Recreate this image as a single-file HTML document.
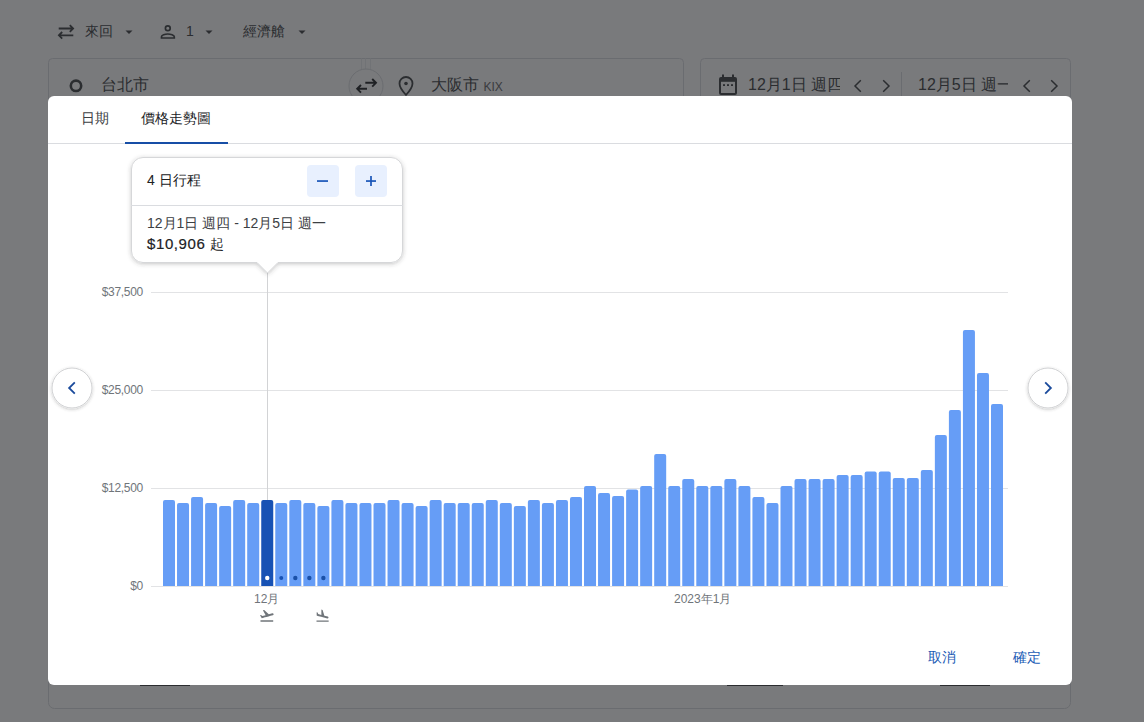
<!DOCTYPE html>
<html><head><meta charset="utf-8">
<style>
*{margin:0;padding:0;box-sizing:border-box}
html,body{width:1144px;height:722px;overflow:hidden;background:#fff;font-family:"Liberation Sans",sans-serif;}
.abs{position:absolute}
.t{position:absolute;white-space:nowrap;line-height:1}
#overlay{position:absolute;left:0;top:0;width:1144px;height:722px;background:rgba(32,33,36,0.6)}
#dlg{position:absolute;left:48px;top:96px;width:1024px;height:589px;background:#fff;border-radius:6px;overflow:hidden}
</style></head><body>
<!-- background page -->
<div id="page" class="abs" style="left:0;top:0;width:1144px;height:722px">
  <svg class="abs" style="left:0;top:0" width="1144" height="722" viewBox="0 0 1144 722">
    <!-- swap icon -->
    <g fill="none" stroke="#3c4043" stroke-width="1.8">
      <path d="M58.7 28.5H72.5M69.8 25.2l3.3 3.3-3.3 3.3"/>
      <path d="M73.3 35.3H59.5M62.2 32l-3.3 3.3 3.3 3.3"/>
    </g>
    <path d="M125.5 30.5h7l-3.5 3.5z" fill="#3c4043"/>
    <path d="M205.5 30.5h7l-3.5 3.5z" fill="#3c4043"/>
    <path d="M298.5 30.5h7l-3.5 3.5z" fill="#3c4043"/>
    <!-- person -->
    <g fill="none" stroke="#3c4043" stroke-width="1.7">
      <circle cx="167.8" cy="28.3" r="2.4"/>
      <path d="M161.5 38v-1.2c0-1.6 3.5-2.8 6.3-2.8s6.5 1.2 6.5 2.8V38z"/>
    </g>
    <!-- boxes -->
    <g fill="none" stroke="#dadce0" stroke-width="1">
      <path d="M48.5 120V62.5a4 4 0 0 1 4-4H679.5a4 4 0 0 1 4 4V120"/>
      <path d="M361.5 58.5V72M365.5 58.5V70M370.5 58.5V72" stroke="#eceef0"/>
      <rect x="700.5" y="58.5" width="370" height="60" rx="4"/>
      <rect x="48.5" y="560.5" width="1022" height="148" rx="6"/>
      <path d="M901.5 72v40"/>
    </g>
    <circle cx="366" cy="86" r="17" fill="#fff" stroke="#dadce0"/>
    <!-- origin circle icon -->
    <circle cx="76" cy="85.8" r="5.2" fill="none" stroke="#3c4043" stroke-width="2.6"/>
    <!-- swap arrows small -->
    <g fill="none" stroke="#202124" stroke-width="1.9">
      <path d="M365.3 82.8H375M372.2 79l3.8 3.8-3.8 3.8"/>
      <path d="M367 88.8H358M361 85l-3.8 3.8 3.8 3.8"/>
    </g>
    <!-- pin -->
    <path d="M406 77a6.5 6.5 0 0 0-6.5 6.5c0 4.5 6.5 11.5 6.5 11.5s6.5-7 6.5-11.5A6.5 6.5 0 0 0 406 77z" fill="none" stroke="#3c4043" stroke-width="1.8"/>
    <circle cx="406" cy="83.5" r="1.8" fill="#3c4043"/>
    <!-- calendar -->
    <g fill="#3c4043">
      <rect x="719" y="77" width="18" height="18" rx="2"/>
      <rect x="722" y="74.5" width="2" height="4"/><rect x="732" y="74.5" width="2" height="4"/>
    </g>
    <rect x="721" y="81.8" width="14" height="11.2" fill="#fff"/>
    <g fill="#3c4043"><rect x="723" y="84.2" width="2" height="1.8"/><rect x="727" y="84.2" width="2" height="1.8"/><rect x="731" y="84.2" width="2" height="1.8"/></g>
    <g fill="none" stroke="#3c4043" stroke-width="1.5">
      <path d="M860.8 80.2l-5.8 5.8 5.8 5.8"/><path d="M883.2 80.2l5.8 5.8-5.8 5.8"/>
      <path d="M1029.8 80.2l-5.8 5.8 5.8 5.8"/><path d="M1051.2 80.2l5.8 5.8-5.8 5.8"/>
    </g>
  </svg>
  <div class="t" style="left:85px;top:24px;font-size:14px;color:#3c4043">來回</div>
  <div class="t" style="left:186px;top:24px;font-size:14px;color:#3c4043">1</div>
  <div class="t" style="left:243px;top:24px;font-size:14px;color:#3c4043">經濟艙</div>
  <div class="t" style="left:101px;top:77px;font-size:16px;color:#3c4043">台北市</div>
  <div class="t" style="left:431px;top:77px;font-size:16px;color:#3c4043">大阪市 <span style="font-size:12px;color:#5f6368;position:relative;top:1px">KIX</span></div>
  <div class="t" style="left:748px;top:77px;width:92px;overflow:hidden;font-size:16px;color:#3c4043">12月1日 週四</div>
  <div class="t" style="left:918px;top:77px;width:90px;overflow:hidden;font-size:16px;color:#3c4043">12月5日 週一</div>
  <div class="abs" style="left:140px;top:685px;width:50px;height:1px;background:#3c4043"></div>
  <div class="abs" style="left:727px;top:685px;width:56px;height:1px;background:#3c4043"></div>
  <div class="abs" style="left:940px;top:685px;width:50px;height:1px;background:#3c4043"></div>
</div>
<div id="overlay"></div>
<div id="dlg">
  <div class="t" style="left:33px;top:15px;font-size:14px;color:#3c4043">日期</div>
  <div class="t" style="left:93px;top:15px;font-size:14px;color:#202124">價格走勢圖</div>
  <div class="abs" style="left:0;top:47px;width:1024px;height:1px;background:#dadce0"></div>
  <div class="abs" style="left:77px;top:46px;width:103px;height:2px;background:#174ea6"></div>
</div>
<svg class="abs" style="left:0;top:0" width="1144" height="722" viewBox="0 0 1144 722">
  <g fill="#e2e3e5">
    <rect x="151" y="292" width="857" height="1"/>
    <rect x="151" y="390" width="857" height="1"/>
    <rect x="151" y="488" width="857" height="1"/>
    <rect x="151" y="586" width="857" height="1"/>
  </g>
  <rect x="267" y="273" width="1" height="313" fill="#d2d3d5"/>
  <path d="M163.00 586V502.00a2 2 0 0 1 2-2h8a2 2 0 0 1 2 2V586z" fill="#669df6"/>
<path d="M177.03 586V505.00a2 2 0 0 1 2-2h8a2 2 0 0 1 2 2V586z" fill="#669df6"/>
<path d="M191.07 586V499.00a2 2 0 0 1 2-2h8a2 2 0 0 1 2 2V586z" fill="#669df6"/>
<path d="M205.10 586V505.00a2 2 0 0 1 2-2h8a2 2 0 0 1 2 2V586z" fill="#669df6"/>
<path d="M219.14 586V508.00a2 2 0 0 1 2-2h8a2 2 0 0 1 2 2V586z" fill="#669df6"/>
<path d="M233.17 586V502.00a2 2 0 0 1 2-2h8a2 2 0 0 1 2 2V586z" fill="#669df6"/>
<path d="M247.20 586V505.00a2 2 0 0 1 2-2h8a2 2 0 0 1 2 2V586z" fill="#669df6"/>
<path d="M261.24 586V502.00a2 2 0 0 1 2-2h8a2 2 0 0 1 2 2V586z" fill="#1852b4"/>
<path d="M275.27 586V505.00a2 2 0 0 1 2-2h8a2 2 0 0 1 2 2V586z" fill="#669df6"/>
<path d="M289.31 586V502.00a2 2 0 0 1 2-2h8a2 2 0 0 1 2 2V586z" fill="#669df6"/>
<path d="M303.34 586V505.00a2 2 0 0 1 2-2h8a2 2 0 0 1 2 2V586z" fill="#669df6"/>
<path d="M317.37 586V508.00a2 2 0 0 1 2-2h8a2 2 0 0 1 2 2V586z" fill="#669df6"/>
<path d="M331.41 586V502.00a2 2 0 0 1 2-2h8a2 2 0 0 1 2 2V586z" fill="#669df6"/>
<path d="M345.44 586V505.00a2 2 0 0 1 2-2h8a2 2 0 0 1 2 2V586z" fill="#669df6"/>
<path d="M359.47 586V505.00a2 2 0 0 1 2-2h8a2 2 0 0 1 2 2V586z" fill="#669df6"/>
<path d="M373.51 586V505.00a2 2 0 0 1 2-2h8a2 2 0 0 1 2 2V586z" fill="#669df6"/>
<path d="M387.54 586V502.00a2 2 0 0 1 2-2h8a2 2 0 0 1 2 2V586z" fill="#669df6"/>
<path d="M401.58 586V505.00a2 2 0 0 1 2-2h8a2 2 0 0 1 2 2V586z" fill="#669df6"/>
<path d="M415.61 586V508.00a2 2 0 0 1 2-2h8a2 2 0 0 1 2 2V586z" fill="#669df6"/>
<path d="M429.64 586V502.00a2 2 0 0 1 2-2h8a2 2 0 0 1 2 2V586z" fill="#669df6"/>
<path d="M443.68 586V505.00a2 2 0 0 1 2-2h8a2 2 0 0 1 2 2V586z" fill="#669df6"/>
<path d="M457.71 586V505.00a2 2 0 0 1 2-2h8a2 2 0 0 1 2 2V586z" fill="#669df6"/>
<path d="M471.75 586V505.00a2 2 0 0 1 2-2h8a2 2 0 0 1 2 2V586z" fill="#669df6"/>
<path d="M485.78 586V502.00a2 2 0 0 1 2-2h8a2 2 0 0 1 2 2V586z" fill="#669df6"/>
<path d="M499.81 586V505.00a2 2 0 0 1 2-2h8a2 2 0 0 1 2 2V586z" fill="#669df6"/>
<path d="M513.85 586V508.00a2 2 0 0 1 2-2h8a2 2 0 0 1 2 2V586z" fill="#669df6"/>
<path d="M527.88 586V502.00a2 2 0 0 1 2-2h8a2 2 0 0 1 2 2V586z" fill="#669df6"/>
<path d="M541.92 586V505.00a2 2 0 0 1 2-2h8a2 2 0 0 1 2 2V586z" fill="#669df6"/>
<path d="M555.95 586V502.00a2 2 0 0 1 2-2h8a2 2 0 0 1 2 2V586z" fill="#669df6"/>
<path d="M569.98 586V499.00a2 2 0 0 1 2-2h8a2 2 0 0 1 2 2V586z" fill="#669df6"/>
<path d="M584.02 586V488.00a2 2 0 0 1 2-2h8a2 2 0 0 1 2 2V586z" fill="#669df6"/>
<path d="M598.05 586V495.00a2 2 0 0 1 2-2h8a2 2 0 0 1 2 2V586z" fill="#669df6"/>
<path d="M612.08 586V498.00a2 2 0 0 1 2-2h8a2 2 0 0 1 2 2V586z" fill="#669df6"/>
<path d="M626.12 586V491.50a2 2 0 0 1 2-2h8a2 2 0 0 1 2 2V586z" fill="#669df6"/>
<path d="M640.15 586V488.00a2 2 0 0 1 2-2h8a2 2 0 0 1 2 2V586z" fill="#669df6"/>
<path d="M654.19 586V456.00a2 2 0 0 1 2-2h8a2 2 0 0 1 2 2V586z" fill="#669df6"/>
<path d="M668.22 586V488.00a2 2 0 0 1 2-2h8a2 2 0 0 1 2 2V586z" fill="#669df6"/>
<path d="M682.25 586V481.00a2 2 0 0 1 2-2h8a2 2 0 0 1 2 2V586z" fill="#669df6"/>
<path d="M696.29 586V488.00a2 2 0 0 1 2-2h8a2 2 0 0 1 2 2V586z" fill="#669df6"/>
<path d="M710.32 586V488.00a2 2 0 0 1 2-2h8a2 2 0 0 1 2 2V586z" fill="#669df6"/>
<path d="M724.36 586V481.00a2 2 0 0 1 2-2h8a2 2 0 0 1 2 2V586z" fill="#669df6"/>
<path d="M738.39 586V488.00a2 2 0 0 1 2-2h8a2 2 0 0 1 2 2V586z" fill="#669df6"/>
<path d="M752.42 586V499.00a2 2 0 0 1 2-2h8a2 2 0 0 1 2 2V586z" fill="#669df6"/>
<path d="M766.46 586V505.00a2 2 0 0 1 2-2h8a2 2 0 0 1 2 2V586z" fill="#669df6"/>
<path d="M780.49 586V488.00a2 2 0 0 1 2-2h8a2 2 0 0 1 2 2V586z" fill="#669df6"/>
<path d="M794.53 586V481.00a2 2 0 0 1 2-2h8a2 2 0 0 1 2 2V586z" fill="#669df6"/>
<path d="M808.56 586V481.00a2 2 0 0 1 2-2h8a2 2 0 0 1 2 2V586z" fill="#669df6"/>
<path d="M822.59 586V481.00a2 2 0 0 1 2-2h8a2 2 0 0 1 2 2V586z" fill="#669df6"/>
<path d="M836.63 586V477.00a2 2 0 0 1 2-2h8a2 2 0 0 1 2 2V586z" fill="#669df6"/>
<path d="M850.66 586V477.00a2 2 0 0 1 2-2h8a2 2 0 0 1 2 2V586z" fill="#669df6"/>
<path d="M864.69 586V473.50a2 2 0 0 1 2-2h8a2 2 0 0 1 2 2V586z" fill="#669df6"/>
<path d="M878.73 586V473.50a2 2 0 0 1 2-2h8a2 2 0 0 1 2 2V586z" fill="#669df6"/>
<path d="M892.76 586V480.00a2 2 0 0 1 2-2h8a2 2 0 0 1 2 2V586z" fill="#669df6"/>
<path d="M906.80 586V480.00a2 2 0 0 1 2-2h8a2 2 0 0 1 2 2V586z" fill="#669df6"/>
<path d="M920.83 586V472.00a2 2 0 0 1 2-2h8a2 2 0 0 1 2 2V586z" fill="#669df6"/>
<path d="M934.86 586V437.00a2 2 0 0 1 2-2h8a2 2 0 0 1 2 2V586z" fill="#669df6"/>
<path d="M948.90 586V412.00a2 2 0 0 1 2-2h8a2 2 0 0 1 2 2V586z" fill="#669df6"/>
<path d="M962.93 586V332.00a2 2 0 0 1 2-2h8a2 2 0 0 1 2 2V586z" fill="#669df6"/>
<path d="M976.97 586V375.00a2 2 0 0 1 2-2h8a2 2 0 0 1 2 2V586z" fill="#669df6"/>
<path d="M991.00 586V406.00a2 2 0 0 1 2-2h8a2 2 0 0 1 2 2V586z" fill="#669df6"/>
  <circle cx="267.24" cy="578" r="2.2" fill="#fff"/><circle cx="281.27" cy="578" r="2" fill="#1852b4"/><circle cx="295.31" cy="578" r="2.2" fill="#1a50a8"/><circle cx="309.34" cy="578" r="2.2" fill="#1a50a8"/><circle cx="323.37" cy="578" r="2.2" fill="#1a50a8"/>
  <!-- plane icons -->
  <g fill="#70757a" transform="translate(258.8,607.6) scale(0.67)">
    <path d="M2.5 19h19v2h-19v-2zm19.57-9.36c-.21-.8-1.04-1.28-1.84-1.06L14.92 10l-6.9-6.43-1.93.51 4.14 7.17-4.97 1.33-1.97-1.54-1.45.39 2.59 4.49s7.12-1.9 16.57-4.43c.81-.23 1.28-1.05 1.07-1.85z"/>
  </g>
  <g fill="#70757a" transform="translate(314.9,608.3) scale(0.64)">
    <path d="M2.5 19h19v2h-19v-2zm7.18-5.73l4.35 1.16 5.31 1.42c.8.21 1.62-.26 1.84-1.06.21-.8-.26-1.62-1.06-1.84l-5.31-1.42-2.76-9.02L10.12 2v8.28L5.15 8.95l-.93-2.32-1.45-.39v5.17l1.6.43 5.31 1.43z"/>
  </g>
  <!-- nav buttons -->
  <g filter="url(#sh)">
    <circle cx="72" cy="388" r="20.5" fill="#fff"/>
    <circle cx="1048" cy="388" r="20.5" fill="#fff"/>
  </g>
  <circle cx="72" cy="388" r="20" fill="none" stroke="#d0d1d3"/>
  <circle cx="1048" cy="388" r="20" fill="none" stroke="#d0d1d3"/>
  <path d="M74.8 382.3l-5.7 5.7 5.7 5.7" fill="none" stroke="#1b4b9c" stroke-width="1.8"/>
  <path d="M1045.2 382.3l5.7 5.7-5.7 5.7" fill="none" stroke="#1b4b9c" stroke-width="1.8"/>
  <defs>
    <filter id="sh" x="-50%" y="-50%" width="200%" height="200%"><feDropShadow dx="0" dy="1" stdDeviation="1.5" flood-color="#3c4043" flood-opacity="0.3"/></filter>
    <filter id="sh2" x="-20%" y="-20%" width="140%" height="150%"><feDropShadow dx="0" dy="1" stdDeviation="2" flood-color="#3c4043" flood-opacity="0.3"/></filter>
  </defs>
  <!-- tooltip -->
  <g filter="url(#sh2)">
    <path d="M143 157.5H391a11.5 11.5 0 0 1 11.5 11.5v82a11.5 11.5 0 0 1-11.5 11.5H278l-10.5 10.5-10.5-10.5H143a11.5 11.5 0 0 1-11.5-11.5v-82A11.5 11.5 0 0 1 143 157.5z" fill="#fff" stroke="#d6d7d9" stroke-width="1"/>
  </g>
  <rect x="131" y="205" width="272" height="1" fill="#dadce0"/>
  <rect x="307" y="165" width="32" height="32" rx="4" fill="#e8f0fe"/>
  <rect x="355" y="165" width="32" height="32" rx="4" fill="#e8f0fe"/>
  <rect x="317" y="180.2" width="11" height="1.7" fill="#1a56b8"/>
  <rect x="366" y="180.2" width="10" height="1.7" fill="#1a56b8"/>
  <rect x="370.15" y="176" width="1.7" height="10" fill="#1a56b8"/>
</svg>
<div class="t" style="left:101px;top:286px;width:42px;text-align:right;font-size:12px;letter-spacing:-0.3px;color:#70757a">$37,500</div>
<div class="t" style="left:101px;top:384px;width:42px;text-align:right;font-size:12px;letter-spacing:-0.3px;color:#70757a">$25,000</div>
<div class="t" style="left:101px;top:482px;width:42px;text-align:right;font-size:12px;letter-spacing:-0.3px;color:#70757a">$12,500</div>
<div class="t" style="left:101px;top:580px;width:42px;text-align:right;font-size:12px;letter-spacing:-0.3px;color:#70757a">$0</div>
<div class="t" style="left:254px;top:593px;font-size:12px;color:#70757a">12月</div>
<div class="t" style="left:674px;top:593px;font-size:12px;color:#70757a">2023年1月</div>
<div class="t" style="left:147px;top:173px;font-size:14px;color:#202124">4 日行程</div>
<div class="t" style="left:147px;top:216px;font-size:14px;color:#3c4043">12月1日 週四 - 12月5日 週一</div>
<div class="t" style="left:147px;top:236px;font-size:15px;letter-spacing:0.6px;color:#202124;-webkit-text-stroke:0.2px #202124">$10,906 <span style="font-size:14px;letter-spacing:0;-webkit-text-stroke:0">起</span></div>
<div class="t" style="left:928px;top:650px;font-size:14px;color:#1a5bb5">取消</div>
<div class="t" style="left:1013px;top:650px;font-size:14px;color:#1a5bb5">確定</div>
</body></html>
